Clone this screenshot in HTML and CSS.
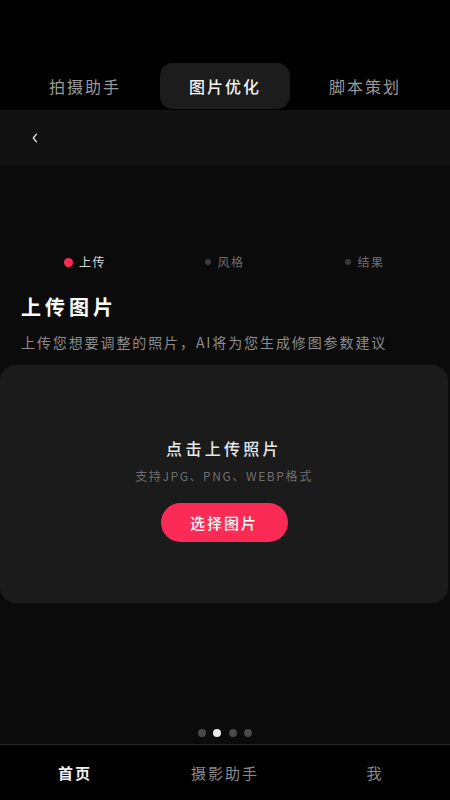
FILE: index.html
```html
<!DOCTYPE html>
<html lang="zh-CN">
<head>
<meta charset="utf-8">
<title>图片优化</title>
<link rel="stylesheet" href="styles.css">
</head>
<body>
<div class="app">
  <nav class="tabs">
    <div class="tab">拍摄助手</div>
    <div class="tab active">图片优化</div>
    <div class="tab">脚本策划</div>
  </nav>
  <header class="bar">
    <svg class="back" width="8" height="12" viewBox="0 0 8 12"><path d="M5.5 2.2 L2.3 6 L5.5 9.8" fill="none" stroke="#e8e8e8" stroke-width="1.3" stroke-linecap="round" stroke-linejoin="round"/></svg>
  </header>
  <main class="content">
    <div class="steps">
      <div class="step active"><span class="sdot"></span>上传</div>
      <div class="step"><span class="sdot"></span>风格</div>
      <div class="step"><span class="sdot"></span>结果</div>
    </div>
    <h1 class="title">上传图片</h1>
    <p class="subtitle">上传您想要调整的照片，AI将为您生成修图参数建议</p>
    <section class="card">
      <div class="card-title">点击上传照片</div>
      <div class="card-sub">支持JPG、PNG、WEBP格式</div>
      <button class="pick">选择图片</button>
    </section>
    <div class="pager">
      <span class="pdot"></span>
      <span class="pdot on"></span>
      <span class="pdot"></span>
      <span class="pdot"></span>
    </div>
  </main>
  <footer class="nav">
    <div class="nav-item on">首页</div>
    <div class="nav-item">摄影助手</div>
    <div class="nav-item">我</div>
  </footer>
</div>
</body>
</html>
```
FILE: styles.css
```css
* { box-sizing: border-box; }
html, body { margin: 0; padding: 0; background: #000; }
body {
  font-family: "Noto Sans CJK SC", "Noto Sans", sans-serif;
  color: #fff;
}
.app {
  width: 450px;
  height: 800px;
  display: flex;
  flex-direction: column;
  background: #000;
  overflow: hidden;
}
.tabs {
  display: grid;
  grid-template-columns: repeat(3, 140px);
  padding: 63px 15px 0;
  height: 110px;
}
.tab {
  height: 46px;
  margin: 0 5px;
  display: flex;
  align-items: center;
  justify-content: center;
  font-size: 16px;
  letter-spacing: 2px;
  color: #9a9a9a;
  border-radius: 13px;
}
.tab.active {
  background: #1c1c1c;
  color: #f2f2f2;
  font-weight: 500;
}
.bar {
  height: 55px;
  background: #121212;
  display: flex;
  align-items: center;
  padding-left: 31px;
}
.content {
  height: 579px;
  background: #0b0b0b;
  display: flex;
  flex-direction: column;
  padding-top: 87px;
}
.steps {
  display: grid;
  grid-template-columns: repeat(3, 140px);
  padding: 0 15px;
  height: 20px;
}
.step {
  display: flex;
  align-items: center;
  justify-content: center;
  gap: 6px;
  font-size: 12px;
  letter-spacing: 1.5px;
  color: #6e6e6e;
  line-height: 20px;
}
.sdot {
  width: 6px;
  height: 6px;
  border-radius: 50%;
  background: #3a3a3a;
}
.step.active { color: #dcdcdc; }
.step.active .sdot {
  width: 9px;
  height: 9px;
  background: #fe2c55;
}
.title {
  margin: 20px 0 0;
  padding-left: 21px;
  font-size: 20px;
  line-height: 30px;
  letter-spacing: 4px;
  font-weight: 700;
  color: #fff;
}
.subtitle {
  margin: 10px 0 0;
  padding-left: 21px;
  font-size: 14px;
  line-height: 20px;
  letter-spacing: 1.9px;
  color: #8c8c8c;
}
.card {
  margin: 13px 2px 0 0;
  height: 238px;
  background: #1b1b1b;
  border-radius: 16px;
  display: flex;
  flex-direction: column;
  align-items: center;
  padding-top: 71px;
}
.card-title {
  font-size: 16px;
  line-height: 24px;
  letter-spacing: 3.3px;
  color: #e8e8e8;
  font-weight: 500;
}
.card-sub {
  margin-top: 7px;
  font-size: 12px;
  line-height: 18px;
  letter-spacing: 1.6px;
  color: #6f6f6f;
}
.pick {
  margin-top: 18px;
  width: 127px;
  height: 39px;
  border: none;
  border-radius: 20px;
  background: #fc2b55;
  color: #fff;
  font-family: inherit;
  font-size: 15px;
  letter-spacing: 2px;
  font-weight: 500;
}
.pager {
  margin-top: auto;
  margin-bottom: 7px;
  display: flex;
  justify-content: center;
  gap: 7.5px;
}
.pdot {
  width: 8px;
  height: 8px;
  border-radius: 50%;
  background: #4a4a4a;
}
.pdot.on { background: #eaeaea; }
.nav {
  height: 56px;
  border-top: 1px solid #262626;
  background: #000;
  display: grid;
  grid-template-columns: repeat(3, 150px);
  align-items: center;
}
.nav-item {
  text-align: center;
  font-size: 15px;
  letter-spacing: 2px;
  color: #8a8a8a;
}
.nav-item.on { color: #f2f2f2; font-weight: 700; }
```
